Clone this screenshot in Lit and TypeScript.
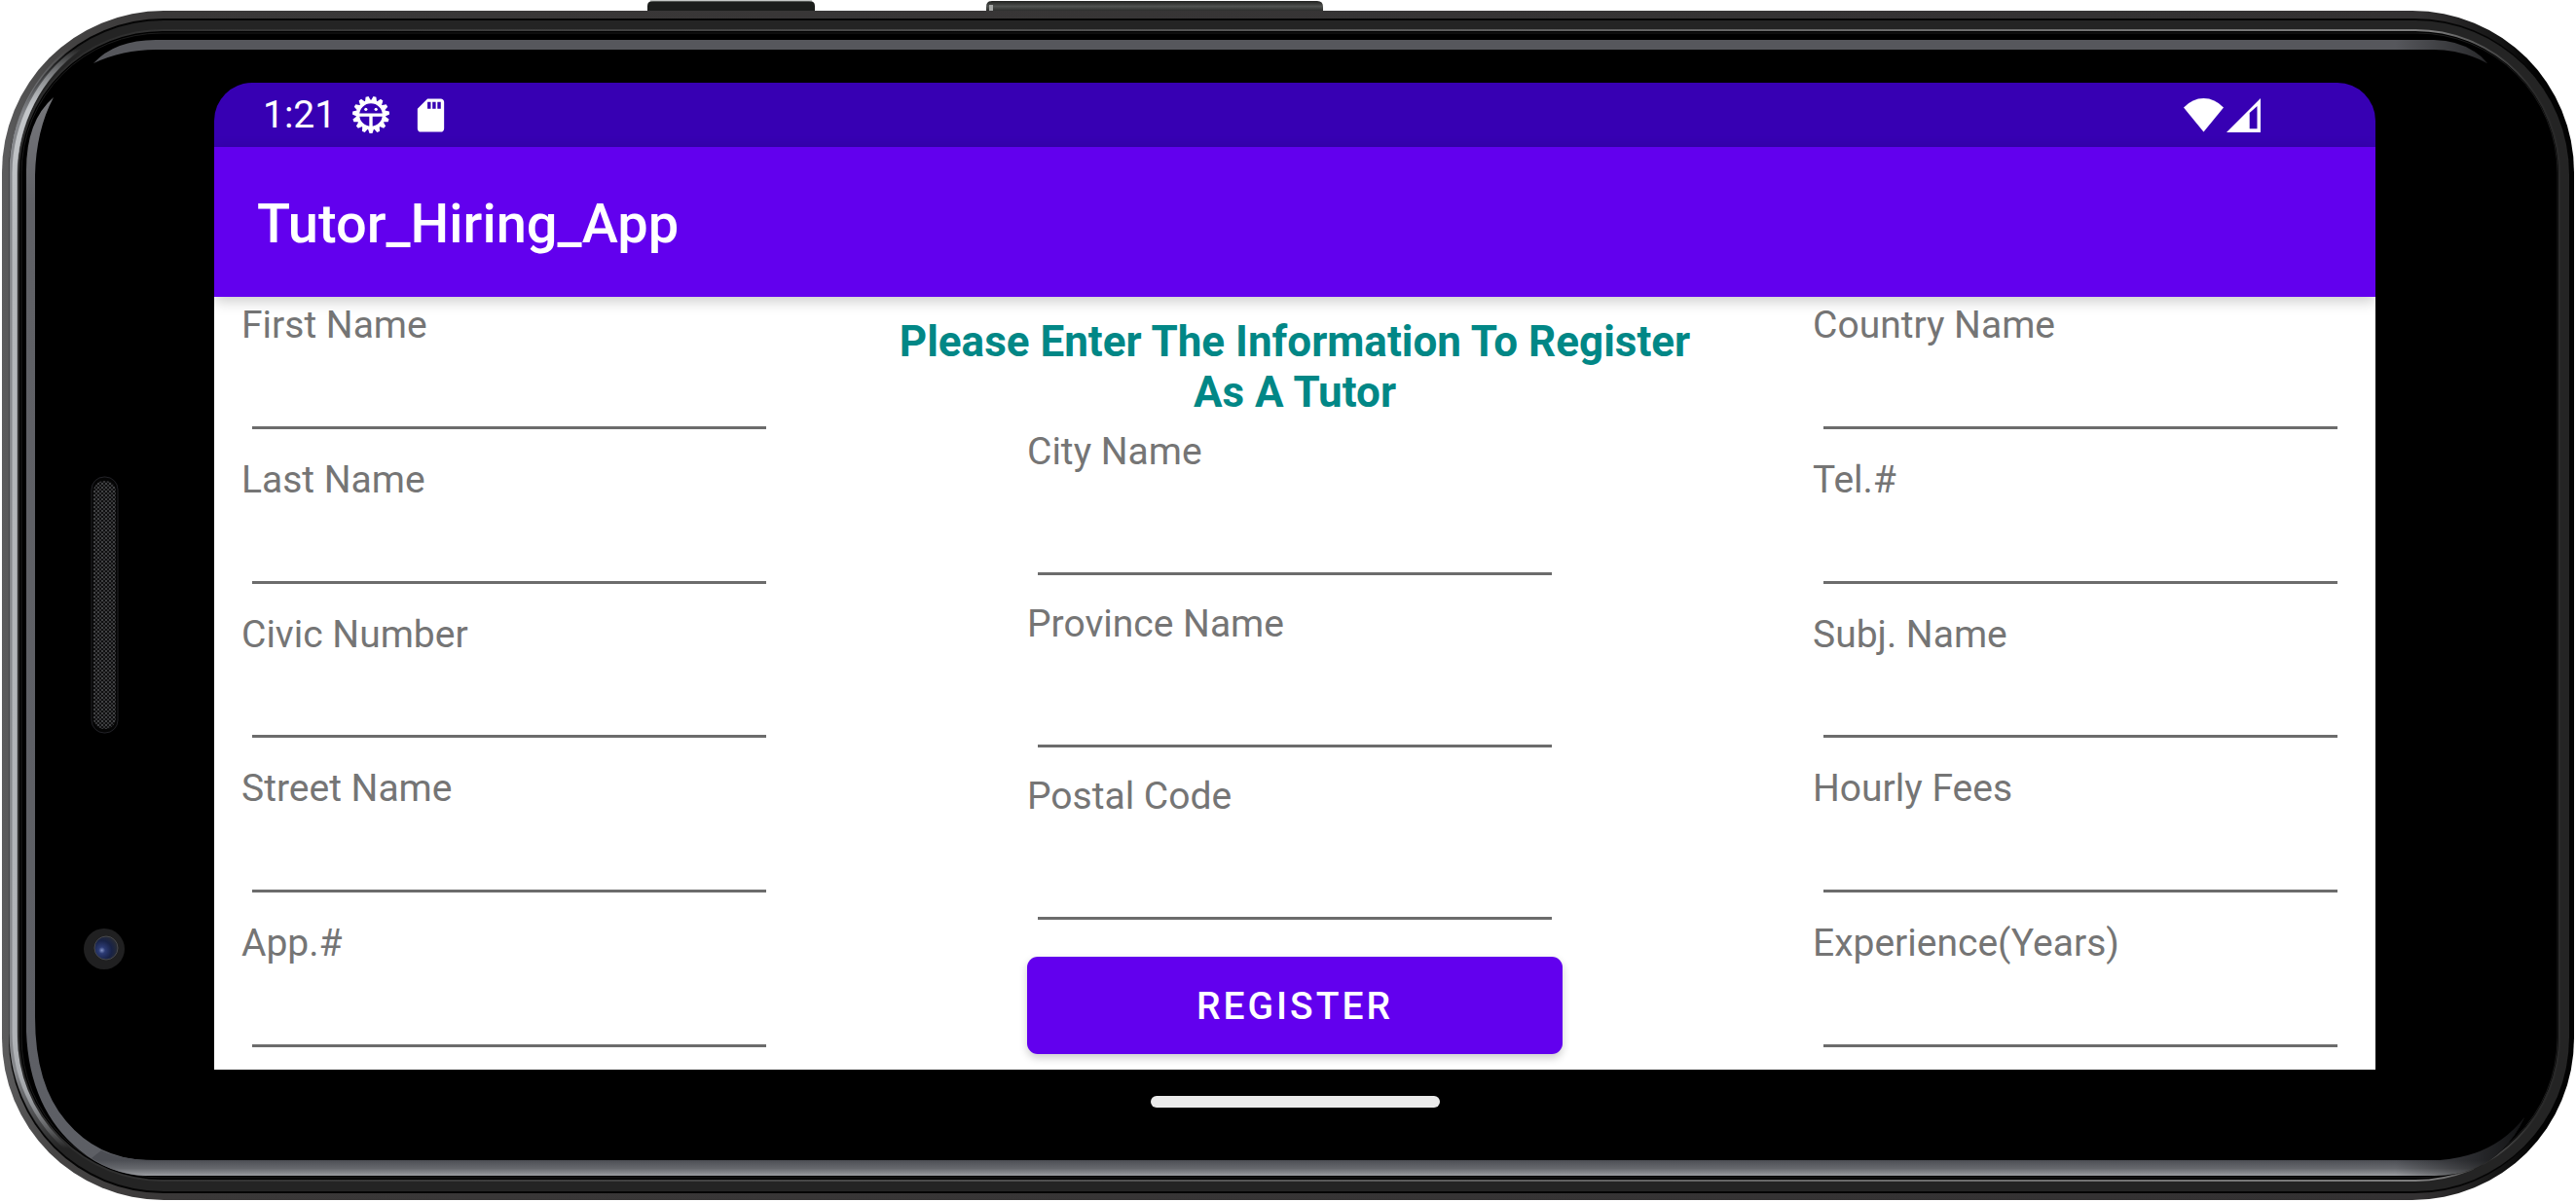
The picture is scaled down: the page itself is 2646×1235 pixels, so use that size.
import { LitElement, html, svg, css } from "lit";
import { customElement, property } from "lit/decorators.js";

/** Path of a rounded rectangle given by its four edges and a corner radius. */
const shell = (l: number, t: number, r: number, b: number, c: number) =>
  `M${l + c} ${t}H${r - c}A${c} ${c} 0 0 1 ${r} ${t + c}V${b - c}A${c} ${c} 0 0 1 ${r - c} ${b}` +
  `H${l + c}A${c} ${c} 0 0 1 ${l} ${b - c}V${t + c}A${c} ${c} 0 0 1 ${l + c} ${t}Z`;

/** The phone body in landscape: keys, metal rim, glass, earpiece and camera. */
@customElement("phone-body")
class PhoneBody extends LitElement {
  static styles = css`
    :host {
      display: block;
    }
    .body {
      display: block;
      width: 100%;
      height: 100%;
    }
  `;

  render() {
    return html`
      <svg class="body" viewBox="0 0 2646 1235" preserveAspectRatio="none" aria-hidden="true">
        <defs>
          <linearGradient id="rim" x1="0" x2="1" y1="0" y2="0">
            <stop offset="0" stop-color="#5c5c5d" />
            <stop offset="0.02" stop-color="#464545" />
            <stop offset="0.06" stop-color="#3a3838" />
            <stop offset="0.94" stop-color="#333132" />
            <stop offset="0.97" stop-color="#161616" />
            <stop offset="0.985" stop-color="#030303" />
          </linearGradient>
          <linearGradient id="edge" x1="0" x2="1" y1="0" y2="0">
            <stop offset="0" stop-color="#2c2c2c" />
            <stop offset="0.95" stop-color="#7d7d7d" />
            <stop offset="0.99" stop-color="#2a2a2a" />
          </linearGradient>
          <linearGradient id="silver" gradientUnits="userSpaceOnUse" x1="0" x2="0" y1="50" y2="1180">
            <stop offset="0" stop-color="#c3c6c9" stop-opacity="0" />
            <stop offset="0.055" stop-color="#c3c6c9" />
            <stop offset="0.2" stop-color="#b4b7ba" />
            <stop offset="0.9" stop-color="#b0b3b7" />
            <stop offset="0.95" stop-color="#b0b3b7" stop-opacity="0.8" />
            <stop offset="1" stop-color="#b0b3b7" stop-opacity="0" />
          </linearGradient>
          <linearGradient id="steel" gradientUnits="userSpaceOnUse" x1="0" x2="0" y1="50" y2="1180">
            <stop offset="0" stop-color="#85878b" stop-opacity="0" />
            <stop offset="0.06" stop-color="#85878b" />
            <stop offset="0.93" stop-color="#85878b" />
            <stop offset="1" stop-color="#85878b" stop-opacity="0" />
          </linearGradient>
          <linearGradient id="glare" gradientUnits="userSpaceOnUse" x1="0" x2="0" y1="1192" y2="1209">
            <stop offset="0" stop-color="#4c4e54" />
            <stop offset="0.5" stop-color="#66686d" />
            <stop offset="1" stop-color="#a2a4a8" />
          </linearGradient>
          <linearGradient id="fade" gradientUnits="userSpaceOnUse" x1="2460" x2="2590" y1="0" y2="0">
            <stop offset="0" stop-color="#000" stop-opacity="0" />
            <stop offset="1" stop-color="#000" stop-opacity="0.75" />
          </linearGradient>
          <linearGradient id="side" gradientUnits="userSpaceOnUse" x1="0" x2="0" y1="100" y2="1200">
            <stop offset="0" stop-color="#77787c" />
            <stop offset="0.1" stop-color="#606166" />
            <stop offset="1" stop-color="#5d5f65" />
          </linearGradient>
          <linearGradient id="key" x1="0" x2="0" y1="0" y2="1">
            <stop offset="0" stop-color="#20211f" />
            <stop offset="0.4" stop-color="#505250" />
            <stop offset="1" stop-color="#0c0d0c" />
          </linearGradient>
          <radialGradient id="lens" cx="0.32" cy="0.6" r="0.7">
            <stop offset="0" stop-color="#8090c4" />
            <stop offset="0.2" stop-color="#2c3b74" />
            <stop offset="0.6" stop-color="#182246" />
            <stop offset="1" stop-color="#2a2d34" />
          </radialGradient>
          <pattern id="mesh" width="4" height="4" patternUnits="userSpaceOnUse">
            <rect width="4" height="4" fill="#101011" />
            <rect width="2" height="2" fill="#414244" />
            <rect x="2" y="2" width="2" height="2" fill="#353537" />
          </pattern>
        </defs>

        <path d="M665 14V6Q665 1 671 1H831Q837 1 837 6V14Z" fill="#1c1e1c" />
        <path d="M668 1H834" stroke="#8b918c" stroke-width="1" />
        <path d="M1013 15V7Q1013 1 1019 1H1353Q1359 1 1359 7V15Z" fill="url(#key)" />
        <path d="M1018 5V12" stroke="#a5a7a5" stroke-width="4" />

        <path d=${shell(2, 11, 2644, 1233, 166)} fill="url(#rim)" />
        <path d=${shell(9, 19, 2639, 1226, 159)} fill="#050505" />
        <path d=${shell(10, 21, 2639, 1224, 158)} fill="#242424" />
        <path d="M80 47A162 162 0 0 0 14 178V1060A162 162 0 0 0 80 1192" fill="none" stroke="url(#steel)" stroke-width="9" />
        <path d="M82 49A160 160 0 0 0 15 178V1060A160 160 0 0 0 82 1190" fill="none" stroke="url(#silver)" stroke-width="5" />
        <path d=${shell(19, 31, 2629, 1213, 148)} fill="#000" stroke="url(#edge)" stroke-width="2" />
        <path d=${shell(22, 34, 2627, 1210, 144)} fill="#000" stroke="#1c1c1c" />

        <path d="M96 65Q118 41 160 41H2500Q2536 42 2555 65Q2528 51 2500 51H160Q126 51 96 65Z" fill="#56575c" />
        <path d="M55 100Q27 124 27 175V1060Q30 1140 82 1182Q112 1207 150 1208L150 1192Q100 1190 68 1152Q36 1115 36 1045V180Q37 134 55 100Z" fill="url(#side)" />
        <path d="M104 1182Q124 1192 160 1192H2506Q2562 1188 2593 1148Q2565 1208 2500 1208H150Q120 1207 94 1190Z" fill="url(#glare)" />
        <path d="M2460 40H2500Q2536 41 2557 66Q2528 52 2500 52H2460Z" fill="url(#fade)" />
        <path d="M2460 1191H2506Q2562 1187 2594 1146Q2566 1209 2500 1209H2460Z" fill="url(#fade)" />

        <rect x="94" y="490" width="27" height="263" rx="13" fill="#050505" stroke="#222227" />
        <rect x="96" y="494" width="23" height="255" rx="11" fill="url(#mesh)" />
        <circle cx="107" cy="975" r="21" fill="#202021" />
        <circle cx="109" cy="974" r="12" fill="url(#lens)" stroke="#47484b" />
      </svg>
    `;
  }
}

/** A caption above an underlined text box. */
@customElement("text-field")
class TextField extends LitElement {
  @property() label = "";
  @property() name = "";

  static styles = css`
    :host {
      display: flex;
      flex-direction: column;
    }
    .label {
      color: #757575;
      font-size: 39px;
      line-height: 46px;
    }
    .input {
      flex: 1;
      min-width: 0;
      min-height: 80px;
      box-sizing: border-box;
      margin: 0 11px;
      padding: 0;
      border: 0;
      border-bottom: 3px solid #6c6c6c;
      border-radius: 0;
      outline: none;
      background: none;
      color: #212121;
      font: inherit;
      font-size: 44px;
    }
    .input:focus {
      border-color: #03dac5;
    }
  `;

  render() {
    return html`
      <label class="label" for="box">${this.label}</label>
      <input class="input" id="box" type="text" name=${this.name} />
    `;
  }
}

const LEFT = ["First Name", "Last Name", "Civic Number", "Street Name", "App.#"];
const MIDDLE = ["City Name", "Province Name", "Postal Code"];
const RIGHT = ["Country Name", "Tel.#", "Subj. Name", "Hourly Fees", "Experience(Years)"];

@customElement("app-root")
class AppRoot extends LitElement {
  static styles = css`
    :host {
      display: block;
      background: #fff;
      font-family: Roboto, "Liberation Sans", sans-serif;
    }
    .phone {
      position: relative;
      box-sizing: border-box;
      min-height: 100vh;
      padding: 85px 206px 0 220px;
      display: flex;
      flex-direction: column;
    }
    .frame {
      position: absolute;
      inset: 0;
    }
    .screen {
      position: relative;
      flex: 1;
      display: flex;
      flex-direction: column;
      overflow: hidden;
      border-radius: 39px 39px 0 0;
    }
    .status {
      display: flex;
      align-items: center;
      height: 66px;
      padding: 0 118px 0 50px;
      background: #3700b3;
      color: #fff;
    }
    .time {
      font-size: 39px;
      line-height: 46px;
      margin-right: 16px;
    }
    .icon {
      display: block;
      fill: #fff;
    }
    .gear {
      margin-right: 21px;
    }
    .wifi {
      margin-left: auto;
      margin-right: 3px;
    }
    .bar {
      position: relative;
      z-index: 1;
      box-sizing: border-box;
      display: flex;
      align-items: center;
      height: 154px;
      padding: 4px 44px 0;
      background: #6200ee;
      box-shadow: 0 4px 14px rgba(0, 0, 0, 0.22);
    }
    .title {
      margin: 0;
      color: #fff;
      font-size: 56px;
      font-weight: 500;
      line-height: 64px;
    }
    .form {
      flex: 1;
      display: grid;
      grid-template-columns: 550px 1fr 550px;
      padding: 0 28px;
      background: #fff;
    }
    .side {
      display: grid;
      grid-template-columns: 100%;
      grid-auto-rows: 1fr;
    }
    .side .field {
      padding: 6px 0 23px;
    }
    .middle {
      display: flex;
      flex-direction: column;
      align-items: center;
      padding: 20px 0 16px;
    }
    .heading {
      max-width: 850px;
      margin: 0 0 12px;
      color: #018786;
      font-size: 44px;
      font-weight: 700;
      line-height: 52px;
      text-align: center;
    }
    .middle .field {
      flex: 1;
      width: 550px;
      padding-bottom: 27px;
    }
    .register {
      width: 550px;
      height: 100px;
      margin: 11px 0 0;
      padding: 2px 0 0;
      border: 0;
      border-radius: 11px;
      background: #6200ee;
      box-shadow: 0 4px 8px rgba(0, 0, 0, 0.2);
      color: #fff;
      font: inherit;
      font-size: 39px;
      font-weight: 500;
      letter-spacing: 3px;
      cursor: pointer;
    }
    .nav {
      position: relative;
      box-sizing: border-box;
      display: flex;
      justify-content: center;
      height: 136px;
      padding-top: 27px;
    }
    .handle {
      width: 297px;
      height: 12px;
      border-radius: 6px;
      background: #ebebeb;
    }
  `;

  private fields(labels: string[]) {
    return labels.map(
      (label) => html`<text-field class="field" .label=${label} .name=${label}></text-field>`
    );
  }

  private gear() {
    const teeth = Array.from({ length: 15 }, (_, i) => i * 24);
    return html`
      <svg class="icon gear" width="40" height="40" viewBox="-20 -20 40 40" aria-hidden="true">
        ${teeth.map(
          (a) => svg`<path d="M-3.2 14L-1.5 19H1.5L3.2 14Z" transform="rotate(${a})" />`
        )}
        <circle r="13.5" fill="none" stroke="#fff" stroke-width="3.4" />
        <path d="M-13 -1.5H13V1.8H1.7V13H-1.7V1.8H-13Z" />
        <circle cx="-5.2" cy="-5.7" r="1.6" />
        <circle cx="5.2" cy="-5.7" r="1.6" />
      </svg>
    `;
  }

  render() {
    return html`
      <div class="phone">
        <phone-body class="frame"></phone-body>
        <main class="screen">
          <div class="status">
            <span class="time">1:21</span>
            ${this.gear()}
            <svg class="icon" width="41" height="41" viewBox="0 0 24 24" aria-hidden="true">
              <path
                d="M18 2h-8L4 8v12c0 1.100.900 2 2 2h12c1.100 0 2-.900 2-2V4c0-1.100-.900-2-2-2zM12 8h-2V4h2zM15 8h-2V4h2zM18 8h-2V4h2z"
                fill-rule="evenodd"
              />
            </svg>
            <svg class="icon wifi" width="41" height="35" viewBox="0 0 41 35" aria-hidden="true">
              <path d="M20.500 34.500L0 9.500Q9 0 20.500 0T41 9.500Z" />
            </svg>
            <svg class="icon" width="35" height="35" viewBox="0 0 35 35" aria-hidden="true">
              <path fill-rule="evenodd" d="M35 0V35H0ZM23.700 15V31.300H31.500V8Z" />
            </svg>
          </div>
          <header class="bar"><h1 class="title">Tutor_Hiring_App</h1></header>
          <form class="form" @submit=${(e: Event) => e.preventDefault()}>
            <div class="side">${this.fields(LEFT)}</div>
            <div class="middle">
              <h2 class="heading">Please Enter The Information To Register As A Tutor</h2>
              ${this.fields(MIDDLE)}
              <button class="register" type="submit">REGISTER</button>
            </div>
            <div class="side">${this.fields(RIGHT)}</div>
          </form>
        </main>
        <div class="nav"><div class="handle"></div></div>
      </div>
    `;
  }
}
